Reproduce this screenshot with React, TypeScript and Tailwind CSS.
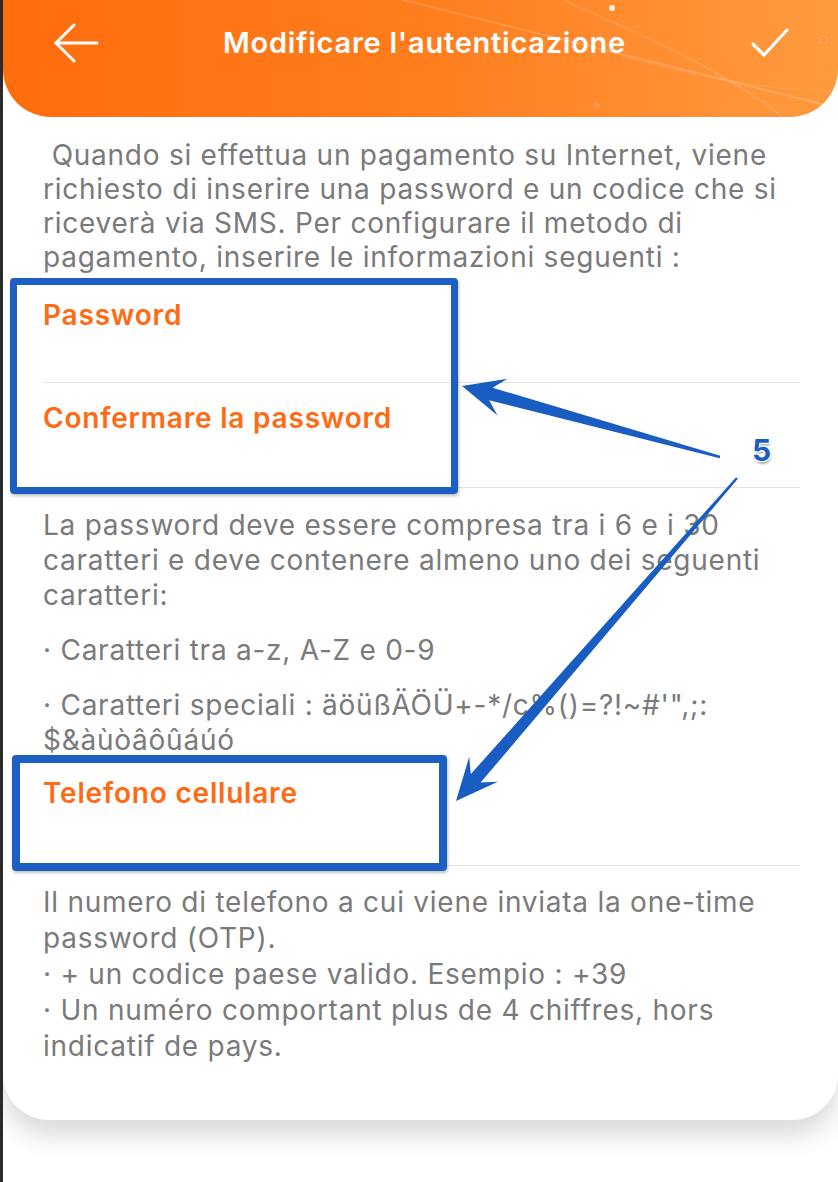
import React from "react";

type Pt = [number, number];

// tapered annotation arrow, drawn from the thin tail to the tip
function arrowPoints(tail: Pt, tip: Pt) {
    const dx = tip[0] - tail[0];
    const dy = tip[1] - tail[1];
    const len = Math.hypot(dx, dy);
    const ux = dx / len;
    const uy = dy / len;
    const nx = -uy;
    const ny = ux;
    const at = (d: number, w: number, from: Pt = tip): string =>
        `${(from[0] - ux * d + nx * w).toFixed(1)},${(from[1] - uy * d + ny * w).toFixed(1)}`;
    return [
        at(0, 0),
        at(42, 19),
        at(30, 6.5),
        at(0, 1.2, tail),
        at(0, -1.2, tail),
        at(30, -6.5),
        at(42, -19),
    ].join(" ");
}

function Field({ label, space }: { label: string; space: string }) {
    return (
        <div className={`ml-[40px] mr-[38px] border-b border-[#e3e3e3] pt-[18px] ${space}`}>
            <div className="text-[28px] leading-[34px] font-semibold tracking-[0.8px] text-[#ff6a14]">{label}</div>
        </div>
    );
}

export default function App() {
    return (
        <div className="relative w-[838px] h-[1182px] bg-white border-l-[3px] border-[#2b2b2b] font-['Inter',sans-serif] overflow-hidden">
            <div className="bg-white rounded-b-[46px] shadow-[0_16px_24px_rgba(0,0,0,0.14)] pb-[56px]">
                <div className="relative h-[117px] rounded-b-[48px] bg-gradient-to-r from-[#ff6c0c] via-[#ff7d1c] to-[#ff9a3e] overflow-hidden">
                    <svg className="absolute inset-0" width="835" height="117" viewBox="0 0 835 117" fill="none">
                        <path d="M400 0 C 520 30, 640 60, 835 108" stroke="white" strokeOpacity="0.22" strokeWidth="1.5" />
                        <path d="M560 0 C 650 40, 720 70, 780 117" stroke="white" strokeOpacity="0.18" strokeWidth="1.5" />
                        <path d="M600 50 C 680 75, 760 90, 835 92" stroke="white" strokeOpacity="0.12" strokeWidth="1" />
                        <circle cx="609" cy="8" r="3" fill="white" fillOpacity="0.85" />
                        <circle cx="820" cy="40" r="4" stroke="white" strokeOpacity="0.2" />
                        <circle cx="594" cy="106" r="3" fill="white" fillOpacity="0.15" />
                    </svg>
                    <div className="relative flex items-center justify-between h-[86px] pl-[50px] pr-[48px]">
                        <svg width="46" height="40" viewBox="0 0 46 40" fill="none" stroke="white" strokeWidth="3" strokeLinecap="round" strokeLinejoin="round">
                            <polyline points="21,2 3,20 21,38" />
                            <line x1="3" y1="20" x2="44" y2="20" />
                        </svg>
                        <h1 className="text-white text-[29px] font-semibold tracking-[0.75px]">Modificare l&apos;autenticazione</h1>
                        <svg width="40" height="32" viewBox="0 0 40 32" fill="none" stroke="white" strokeWidth="3.2" strokeLinecap="round" strokeLinejoin="round">
                            <polyline points="3,17 14,28 37,3" />
                        </svg>
                    </div>
                </div>

                <p className="mt-[21px] ml-[40px] mr-[32px] text-[28px] leading-[34px] tracking-[0.75px] text-[#7a7a7a]">
                    &nbsp;Quando si effettua un pagamento su Internet, viene richiesto di inserire una password e un codice che si riceverà via SMS. Per configurare il metodo di pagamento, inserire le informazioni seguenti :
                </p>

                <Field label="Password" space="pb-[50px] mt-[6px]" />
                <Field label="Confermare la password" space="pb-[52px]" />

                <div className="mt-[20px] ml-[40px] mr-[32px] text-[28px] leading-[35px] tracking-[0.75px] text-[#7a7a7a] flex flex-col gap-[20px]">
                    <p>La password deve essere compresa tra i 6 e i 30 caratteri e deve contenere almeno uno dei seguenti caratteri:</p>
                    <p>· Caratteri tra a-z, A-Z e 0-9</p>
                    <p>· Caratteri speciali : äöüßÄÖÜ+-*/c%()=?!~#&apos;&quot;,;: $&amp;àùòâôûáúó</p>
                </div>

                <Field label="Telefono cellulare" space="pb-[55px]" />

                <div className="mt-[18px] ml-[40px] mr-[32px] text-[28px] leading-[36px] tracking-[0.75px] text-[#7a7a7a]">
                    <p>Il numero di telefono a cui viene inviata la one-time password (OTP).</p>
                    <p>· + un codice paese valido. Esempio : +39</p>
                    <p>· Un numéro comportant plus de 4 chiffres, hors indicatif de pays.</p>
                </div>
            </div>

            {/* annotation overlay */}
            <div className="absolute left-[7px] top-[278px] w-[448px] h-[216px] border-[7px] border-[#1b5fc2] rounded-[4px] shadow-[1px_2px_3px_rgba(0,0,0,0.25)] pointer-events-none" />
            <div className="absolute left-[9px] top-[755px] w-[435px] h-[116px] border-[8px] border-[#1b5fc2] rounded-[4px] shadow-[1px_2px_3px_rgba(0,0,0,0.25)] pointer-events-none" />
            <svg className="absolute inset-0 pointer-events-none" width="838" height="1182" viewBox="0 0 838 1182">
                <polygon points={arrowPoints([717, 457], [459, 386])} fill="#1a5dc2" />
                <polygon points={arrowPoints([734, 478], [453, 801])} fill="#1a5dc2" />
            </svg>
            <span className="absolute left-[749px] top-[432px] text-[30px] leading-[36px] font-bold text-[#1b5fc2] [text-shadow:1px_1px_0_white,-1px_-1px_0_white,1px_-1px_0_white,-1px_1px_0_white,1px_3px_2px_rgba(0,0,0,0.3)]">
                5
            </span>
        </div>
    );
}
